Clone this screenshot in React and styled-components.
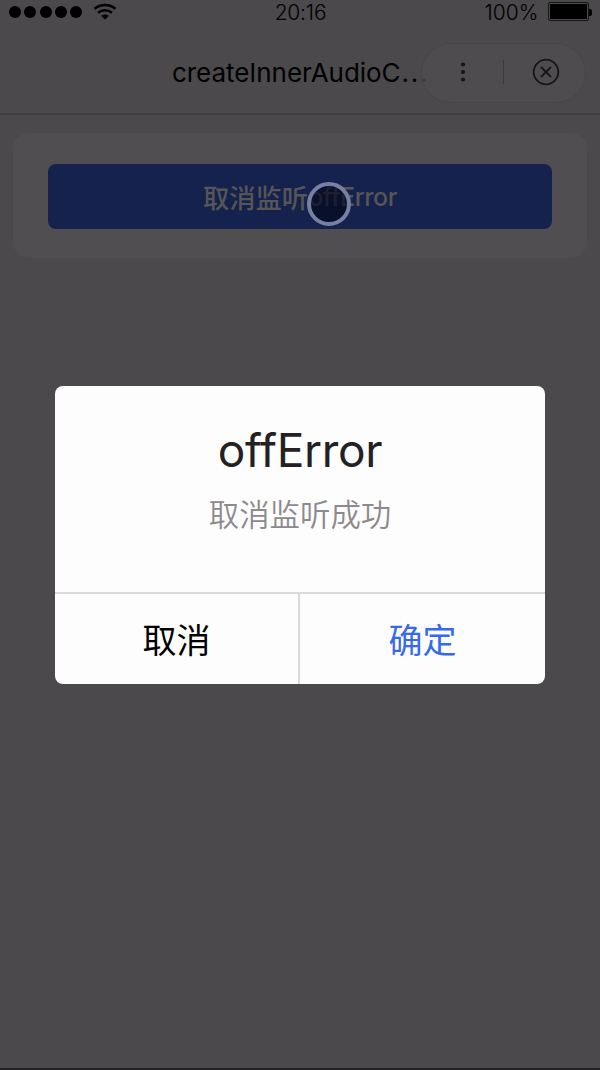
import styled, { createGlobalStyle } from "styled-components";
import React from "react";

const App = () => {
  return (
    <Wrapper>
      <GlobalStyle />
      <StatusBar>
        <Signal>
          <Dot />
          <Dot />
          <Dot />
          <Dot />
          <Dot />
          <Wifi viewBox="0 0 24 17">
            <path d="M1.5 5.8C7.5 0.6 16.5 0.6 22.5 5.8" />
            <path d="M5.1 9.8C9 6.5 15 6.5 18.9 9.8" />
            <path
              d="M8.2 13C10.3 11 13.7 11 15.8 13L12 16.6Z"
              fill="#000"
              stroke="none"
            />
          </Wifi>
        </Signal>
        <Time>20:16</Time>
        <Power>
          <Percent>100%</Percent>
          <Battery />
          <BatteryTip />
        </Power>
      </StatusBar>
      <NavBar>
        <NavTitle>
          createInnerAudioC<Dots>...</Dots>
        </NavTitle>
        <Capsule>
          <More viewBox="0 0 6 22">
            <circle cx="3" cy="3.5" r="2.1" />
            <circle cx="3" cy="11" r="2.1" />
            <circle cx="3" cy="18.5" r="2.1" />
          </More>
          <Line />
          <Close viewBox="0 0 28 28">
            <circle cx="14" cy="14" r="12.3" />
            <path d="M9 9L19 19M19 9L9 19" />
          </Close>
        </Capsule>
      </NavBar>
      <Card>
        <MainButton>
          取消监听<Latin>offError</Latin>
          <Touch />
        </MainButton>
      </Card>
      <Mask>
        <Modal>
          <ModalBody>
            <ModalTitle>offError</ModalTitle>
            <ModalDesc>取消监听成功</ModalDesc>
          </ModalBody>
          <ButtonRow>
            <ModalButton color="#000">取消</ModalButton>
            <ModalButton color="#3769ef">确定</ModalButton>
          </ButtonRow>
        </Modal>
      </Mask>
    </Wrapper>
  );
};

export default App;

const GlobalStyle = createGlobalStyle`
  body {
    margin: 0;
    background: #4b494b;
  }
`;

const Wrapper = styled.div`
  box-sizing: border-box;
  position: relative;
  width: 600px;
  height: 1070px;
  overflow: hidden;
  background: #4b494b;
  border-bottom: 2px solid #232023;
  font-family: Inter, "Noto Sans CJK SC", sans-serif;
  color: #000;
`;
const StatusBar = styled.div`
  display: grid;
  grid-template-columns: 1fr auto 1fr;
  align-items: center;
  height: 24px;
  padding: 0 8px 0 9px;
`;
const Signal = styled.div`
  display: flex;
  align-items: center;
  gap: 3.3px;
`;
const Dot = styled.span`
  width: 12px;
  height: 12px;
  border-radius: 50%;
  background: #000;
`;
const Wifi = styled.svg`
  width: 24px;
  height: 17px;
  margin: -2px 0 0 7.5px;
  fill: none;
  stroke: #000;
  stroke-width: 2.5;
`;
const Time = styled.div`
  padding-top: 1px;
  font-size: 21px;
  font-weight: 300;
  line-height: 23px;
  letter-spacing: -0.2px;
`;
const Power = styled.div`
  display: flex;
  align-items: center;
  justify-content: flex-end;
`;
const Percent = styled.div`
  padding-top: 1px;
  margin-right: 9.5px;
  font-size: 21px;
  font-weight: 300;
  line-height: 23px;
`;
const Battery = styled.div`
  box-sizing: border-box;
  width: 41px;
  height: 19px;
  padding: 1px;
  margin-top: -1px;
  border: 1px solid #171617;
  border-radius: 2px;
  background: #000 content-box;
`;
const BatteryTip = styled.div`
  width: 3px;
  height: 7px;
  border-radius: 0 2px 2px 0;
  background: #000;
`;
const NavBar = styled.div`
  box-sizing: border-box;
  display: flex;
  align-items: center;
  height: 91px;
  padding: 9px 14px 0 172px;
  border-bottom: 2px solid #403e40;
`;
const NavTitle = styled.div`
  width: 249px;
  font-size: 26px;
  line-height: 34px;
  letter-spacing: -0.05px;
  white-space: nowrap;
`;
const Dots = styled.span`
  margin-left: 1px;
  letter-spacing: 1.7px;
`;
const Capsule = styled.div`
  box-sizing: border-box;
  position: relative;
  display: flex;
  align-items: center;
  width: 165px;
  height: 60px;
  padding: 0 24px 3px 37.5px;
  border: 1px solid #474547;
  border-radius: 30px;
  background: rgba(80, 78, 80, 0.75);
`;
const More = styled.svg`
  width: 6px;
  height: 22px;
  fill: #171617;
`;
const Line = styled.span`
  width: 1px;
  height: 24px;
  margin: 0 28px 0 37.5px;
  background: #3b393b;
`;
const Close = styled.svg`
  flex-shrink: 0;
  width: 28px;
  height: 28px;
  fill: none;
  stroke: #171617;
  stroke-width: 1.8;
`;
const Card = styled.div`
  margin: 18px 13px 0;
  padding: 31px 35px 29px;
  border-radius: 16px;
  background: #504e50;
`;
const MainButton = styled.div`
  position: relative;
  display: flex;
  align-items: center;
  justify-content: center;
  height: 65px;
  border-radius: 8px;
  background: #14224d;
  color: #575556;
  font-size: 26.3px;
  font-weight: 500;
`;
const Latin = styled.span`
  padding-top: 1px;
  font-size: 25px;
  letter-spacing: -0.4px;
`;
/* finger position, drawn over the label */
const Touch = styled.span`
  box-sizing: border-box;
  position: absolute;
  top: 17.5px;
  left: 259px;
  width: 44px;
  height: 44px;
  border: 4px solid #7680a3;
  border-radius: 50%;
  background: rgba(4, 8, 28, 0.68);
`;
const Mask = styled.div`
  position: absolute;
  inset: 0;
  display: flex;
  align-items: flex-start;
  justify-content: center;
  padding-top: 386px;
`;
const Modal = styled.div`
  width: 490px;
  height: 298px;
  border-radius: 8px;
  overflow: hidden;
  background: #fefdfe;
`;
const ModalBody = styled.div`
  box-sizing: border-box;
  height: 206px;
  padding-top: 36px;
  text-align: center;
`;
const ModalTitle = styled.div`
  font-size: 46px;
  font-weight: 400;
  line-height: 56px;
  letter-spacing: -0.3px;
  color: #242124;
`;
const ModalDesc = styled.div`
  margin-top: 15px;
  font-size: 30.4px;
  font-weight: 350;
  line-height: 44px;
  color: #8c8a8c;
`;
const ButtonRow = styled.div`
  display: flex;
  height: 90px;
  border-top: 2px solid #d9d8da;
`;
const ModalButton = styled.div`
  box-sizing: border-box;
  width: 50%;
  padding-top: 2px;
  font-size: 34px;
  line-height: 90px;
  text-align: center;
  color: ${(props) => props.color};
  &:first-child {
    border-right: 2px solid #d9d8da;
  }
`;
